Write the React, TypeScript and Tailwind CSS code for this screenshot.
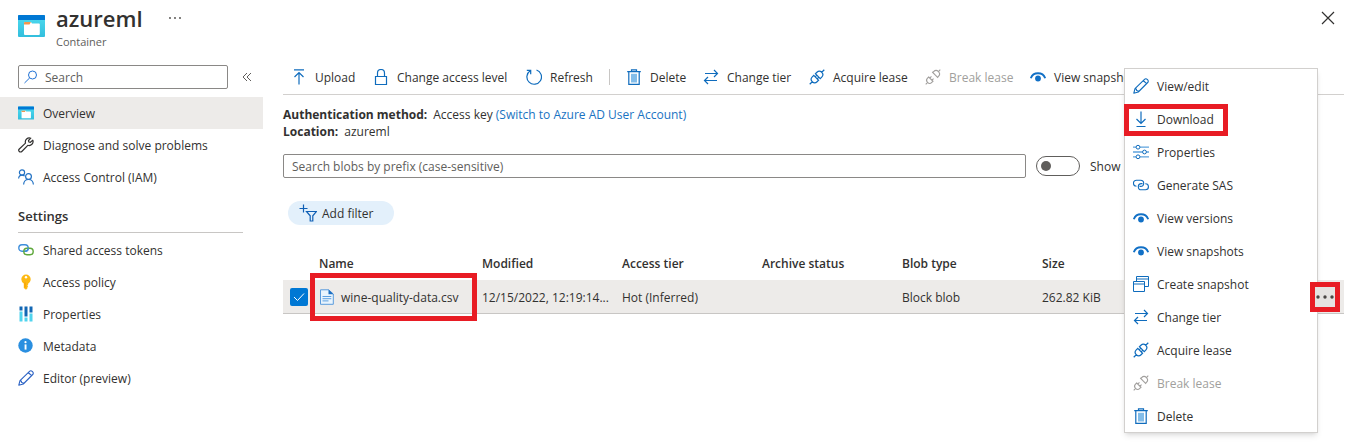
import React from "react";

type IconProps = { className?: string };

const blue = "text-[#0f6cbd]";

function Svg({ className = "", children }: { className?: string; children: React.ReactNode }) {
  return (
    <svg viewBox="0 0 16 16" fill="none" stroke="currentColor" strokeWidth="1" aria-hidden="true" className={`size-4 shrink-0 ${className}`}>
      {children}
    </svg>
  );
}

function ContainerIcon({ className = "size-4" }: IconProps) {
  return (
    <svg viewBox="0 0 27 24" aria-hidden="true" className={`shrink-0 ${className}`}>
      <defs>
        <linearGradient id="container-body" x1="0" y1="0" x2="0" y2="1">
          <stop offset="0" stopColor="#4fdcf0" />
          <stop offset="1" stopColor="#32bedd" />
        </linearGradient>
      </defs>
      <rect x="0" y="1" width="27" height="22" rx="1" fill="url(#container-body)" />
      <path d="M1 1h25a1 1 0 0 1 1 1v4H0V2a1 1 0 0 1 1-1z" fill="#0078d4" />
      <path d="M6 8.500q0-.5.5-.5H13l1 1.500h7q.8 0 .8.800V20q0 1-1 1H7q-1 0-1-1z" fill="#fff" />
      <path d="M6 8.500q0-.5.5-.5H13l-1.500 2.500H6z" fill="#f0974e" />
    </svg>
  );
}

const SearchIcon = () => (
  <Svg className="text-[#2272d4]">
    <circle cx="9.500" cy="6" r="4" />
    <path d="M6.600 9 1.500 14" />
  </Svg>
);
const WrenchIcon = () => (
  <Svg className="text-[#323130]">
    <path strokeWidth="1.200" strokeLinejoin="round" d="M12.800 1.200a4 4 0 0 0-5.300 4.900L1.300 12a1.700 1.700 0 0 0 2.500 2.500l6-6.200a4 4 0 0 0 5-5.200l-2.400 2.200-1.500-.3-.4-1.500z" />
  </Svg>
);
const PeopleIcon = () => (
  <Svg className="text-[#2272c4]">
    <circle cx="4" cy="3.500" r="2.600" strokeWidth="1.200" />
    <circle cx="10.500" cy="7.500" r="2.900" strokeWidth="1.200" />
    <path strokeWidth="1.200" d="M.6 9.500c.2-2 1.600-3.300 3.400-3.300 1 0 2 .4 2.600 1M5.600 15.500c.2-3 2.200-5 4.900-5s4.700 2 4.900 5" />
  </Svg>
);
const TokensIcon = () => (
  <Svg>
    <rect x=".8" y="2.800" width="9.400" height="6.400" rx="3.200" stroke="#3f8fdc" strokeWidth="1.400" />
    <rect x="5.800" y="6.300" width="9.400" height="6.400" rx="3.200" stroke="#5fa83c" strokeWidth="1.400" />
    <path d="M7 9.200c1.800 0 3.200-1.200 3.200-3.200" stroke="#3f8fdc" strokeWidth="1.400" />
  </Svg>
);
const KeyIcon = () => (
  <Svg>
    <path stroke="none" fill="#fdb913" d="M8 .6a4.700 4.700 0 0 1 4.700 4.700c0 1.800-1 3.300-2.500 4.100v1l-.9.9.9.9-.9 1 .4.700L8 15.700l-2.200-1.800V9.400a4.700 4.700 0 0 1-2.500-4.100A4.700 4.700 0 0 1 8 .6z" />
    <circle cx="8" cy="3.200" r="1.200" fill="#fff" stroke="none" />
    <path d="M7 8.500v5" stroke="#f59b00" />
  </Svg>
);
const BarsIcon = () => (
  <Svg>
    <g stroke="none">
      <path fill="#50d4ee" d="M1.500 5.500h3v10h-3zM6.500 11.500h3v4h-3zM11.500 7.500h3v8h-3z" />
      <path fill="#1267b4" d="M1.500.5h3v4h-3zM6.500.5h3v10h-3zM11.500.5h3v6h-3z" />
    </g>
  </Svg>
);
const InfoIcon = () => (
  <Svg>
    <circle cx="7.500" cy="7.500" r="7.200" fill="#2a8fe0" stroke="none" />
    <path d="M6.600 6.400h1.900v5.200H6.600z" fill="#fff" stroke="none" />
    <circle cx="7.500" cy="4.200" r="1.100" fill="#fff" stroke="none" />
  </Svg>
);
const PencilIcon = ({ className = blue }: IconProps) => (
  <Svg className={className}>
    <path strokeLinejoin="round" strokeWidth="1.100" d="m.8 15.200 1.200-4.600L11.500 1.300a1.900 1.900 0 0 1 2.700 0l.5.500a1.900 1.900 0 0 1 0 2.700L5.300 14zM10.300 2.500l3.200 3.200M2 10.600l1.300.4.300 1.500 1.400.2.300 1.300" />
  </Svg>
);
const UploadIcon = () => (
  <Svg className={blue}>
    <path strokeWidth="1.200" d="M3 .8h10M8 15.500V3.500M3.500 8 8 3.500 12.500 8" />
  </Svg>
);
const LockIcon = () => (
  <Svg className={blue}>
    <path strokeWidth="1.200" d="M2.500 7.500h11v8h-11zM4.500 7.500V4a3.500 3.500 0 0 1 7 0v3.500" />
  </Svg>
);
const RefreshIcon = () => (
  <Svg className={blue}>
    <path strokeWidth="1.200" d="M10.500 1a7.300 7.300 0 1 1-6.300.8M.8 1.300h3.900v4" />
  </Svg>
);
const TrashIcon = () => (
  <Svg className={blue}>
    <path fill="#83bde9" stroke="none" d="M5 4.800h6v8.700H5z" />
    <path strokeWidth="1.200" d="M1.200 2.600h13.600M5.500 2.600V.8h5v1.800M2.800 2.600v12.800h10.400V2.600" />
  </Svg>
);
const SwapIcon = () => (
  <Svg className={blue}>
    <path strokeWidth="1.200" d="M2 4.500h12.500M11 1l3.500 3.500L11 8M14 11.500H1.500M5 8l-3.500 3.500L5 15" />
  </Svg>
);
const PlugIcon = () => (
  <Svg className={blue}>
    <path
      transform="rotate(-45 8 8)"
      strokeWidth="1.200"
      d="M-2.300 8h3.600M14.700 8h3.600M6.800 4.600H4.700a3.400 3.400 0 0 0 0 6.800h2.100zM9.200 4.600h2.100a3.400 3.400 0 0 1 0 6.800H9.200zM6.800 6.600h2.400M6.800 9.400h2.400"
    />
  </Svg>
);
const BreakIcon = () => (
  <Svg className="text-[#a19f9d]">
    <path
      transform="rotate(-45 8 8)"
      strokeWidth="1.100"
      d="M-2.300 8h2.600M15.700 8h2.600M5 5H3.300a3 3 0 0 0 0 6H5zM11 4.600h1.300a3.400 3.400 0 0 1 0 6.800H11zM5 6.500h2.300M5 9.500h2.300M11 3.800v8.400"
    />
  </Svg>
);
const EyeIcon = () => (
  <Svg className="text-[#1170c6]">
    <circle cx="8" cy="9.500" r="2.900" fill="currentColor" stroke="none" />
    <path strokeWidth="1.900" d="M.8 9.300C1.900 6 4.700 4.200 8 4.200s6.100 1.800 7.200 5.100" />
  </Svg>
);
const DownloadIcon = () => (
  <Svg className={blue}>
    <path strokeWidth="1.200" d="M3.500 15.500h9M8 .5v12M3.500 8 8 12.500 12.500 8" />
  </Svg>
);
const SlidersIcon = () => (
  <Svg className={blue}>
    <path stroke="#5ea3dd" strokeWidth="1.300" d="M0 3.200h3M7 3.200h9M0 8h9.500M13.500 8H16M0 12.800h3M7 12.800h9" />
    <circle cx="5" cy="3.200" r="1.900" />
    <circle cx="11.500" cy="8" r="1.900" />
    <circle cx="5" cy="12.800" r="1.900" />
  </Svg>
);
const LinkIcon = () => (
  <Svg className={blue}>
    <path strokeWidth="1.100" d="M3.500 9.300A3 3 0 0 1 3.500 3.200H7.600a3.100 3.100 0 0 1 0 6.200H6.500M12.300 6.700a3 3 0 0 1 .2 6.100H8.400a3.100 3.100 0 0 1 0-6.200h1.100" />
  </Svg>
);
const WindowsIcon = () => (
  <Svg className={blue}>
    <path d="M.5 5.500h11v10H.5zM.5 8h11M3.500 5.500v-5h12v10h-4M3.500 3h12" />
  </Svg>
);
const FilterIcon = () => (
  <svg viewBox="0 0 18 18" fill="none" stroke="#0f5fb5" strokeWidth="1.200" aria-hidden="true" className="size-[18px] shrink-0">
    <path d="M4.500.5v8M.5 4.500h8M7.500 7.500h10l-3.700 4.300v5.200h-2.600v-5.200z" />
  </svg>
);
const FileIcon = () => (
  <Svg>
    <path d="M1.500.8h8.200L14.300 5v10.300H1.500z" fill="#e9f4fd" stroke="#5b9bdc" />
    <path d="M9.500.5v4.800h5z" fill="#1c6fc2" stroke="none" />
    <path d="M3.500 7.500h8.800M3.500 9.700h8.800M3.500 11.900h6" stroke="#5ea0e0" />
  </Svg>
);

const primaryNav = [
  { label: "Overview", icon: <ContainerIcon />, active: true },
  { label: "Diagnose and solve problems", icon: <WrenchIcon /> },
  { label: "Access Control (IAM)", icon: <PeopleIcon /> },
];

const settingsNav = [
  { label: "Shared access tokens", icon: <TokensIcon /> },
  { label: "Access policy", icon: <KeyIcon /> },
  { label: "Properties", icon: <BarsIcon /> },
  { label: "Metadata", icon: <InfoIcon /> },
  { label: "Editor (preview)", icon: <PencilIcon className="text-[#2b62c4]" /> },
];

const toolbar = [
  { label: "Upload", icon: <UploadIcon />, width: "w-[82px]" },
  { label: "Change access level", icon: <LockIcon />, width: "w-[153px]" },
  { label: "Refresh", icon: <RefreshIcon />, width: "w-[83px]", divider: true },
  { label: "Delete", icon: <TrashIcon />, width: "w-[77px]" },
  { label: "Change tier", icon: <SwapIcon />, width: "w-[106px]" },
  { label: "Acquire lease", icon: <PlugIcon />, width: "w-[116px]" },
  { label: "Break lease", icon: <BreakIcon />, width: "w-[105px]", disabled: true },
  { label: "View snapshots", icon: <EyeIcon />, width: "w-[120px]" },
];

const menu = [
  { label: "View/edit", icon: <PencilIcon /> },
  { label: "Download", icon: <DownloadIcon />, marked: true },
  { label: "Properties", icon: <SlidersIcon /> },
  { label: "Generate SAS", icon: <LinkIcon /> },
  { label: "View versions", icon: <EyeIcon /> },
  { label: "View snapshots", icon: <EyeIcon /> },
  { label: "Create snapshot", icon: <WindowsIcon /> },
  { label: "Change tier", icon: <SwapIcon /> },
  { label: "Acquire lease", icon: <PlugIcon /> },
  { label: "Break lease", icon: <BreakIcon />, disabled: true },
  { label: "Delete", icon: <TrashIcon /> },
];

function NavList({ items }: { items: { label: string; icon: React.ReactNode; active?: boolean }[] }) {
  return (
    <ul>
      {items.map((item) => (
        <li key={item.label}>
          <a
            href="#"
            aria-current={item.active ? "page" : undefined}
            className={`flex h-8 items-center gap-[9px] pl-[18px] ${item.active ? "bg-[#edebe9]" : ""}`}
          >
            {item.icon}
            {item.label}
          </a>
        </li>
      ))}
    </ul>
  );
}

export default function App() {
  return (
    <div className="relative overflow-hidden bg-white pb-[54px] font-['Open_Sans','Noto_Sans',sans-serif] text-[12px] leading-[17px] text-[#323130]">
      <header className="flex h-[65px] items-start pr-[25px] pl-[18px]">
        <ContainerIcon className="mt-3.5 h-6 w-[27px]" />
        <div className="ml-[11px]">
          <h1 className="mt-[3px] h-[30px] text-[22px] leading-[30px] font-semibold">azureml</h1>
          <p className="text-[11px] leading-[18px] text-[#605e5c]">Container</p>
        </div>
        <button aria-label="More options" className="mt-[15px] ml-6 flex h-1.5 w-4 items-center justify-center">
          <svg viewBox="0 0 14 4" className="h-1 w-3.5" fill="#484644" aria-hidden="true">
            <circle cx="2" cy="2" r="0.9" />
            <circle cx="7" cy="2" r="0.9" />
            <circle cx="12" cy="2" r="0.9" />
          </svg>
        </button>
        <button aria-label="Close" className="mt-[11px] ml-auto">
          <svg viewBox="0 0 14 14" className="size-3.5" fill="none" stroke="#323130" strokeWidth="1.200" aria-hidden="true">
            <path d="m1 1 12 12M13 1 1 13" />
          </svg>
        </button>
      </header>

      <div className="flex">
        <aside className="w-[263px] shrink-0">
          <div className="mb-2 flex items-center gap-3.5 pl-[18px]">
            <label className="flex h-6 w-[210px] items-center gap-1.5 rounded-xs border border-[#8a8886] pl-1">
              <SearchIcon />
              <input aria-label="Search" placeholder="Search" className="w-full min-w-0 outline-none placeholder:text-[#605e5c]" />
            </label>
            <button aria-label="Collapse menu">
              <svg viewBox="0 0 10 10" className="size-2.5" fill="none" stroke="#605e5c" aria-hidden="true">
                <path d="M5 1 1 5l4 4M9 1 5 5l4 4" />
              </svg>
            </button>
          </div>
          <nav aria-label="Container">
            <NavList items={primaryNav} />
            <h2 className="mt-[15px] mr-5 mb-px ml-[18px] border-b border-[#c8c6c4] pb-[7px] text-[13px] font-semibold">Settings</h2>
            <NavList items={settingsNav} />
          </nav>
        </aside>

        <main className="min-w-0 flex-1 pr-4 pl-5">
          <div role="toolbar" aria-label="Blob actions" className="flex h-[30px] items-start overflow-hidden border-b border-[#d2d0ce] pl-2">
            {toolbar.map((item) => (
              <React.Fragment key={item.label}>
                <button
                  disabled={item.disabled}
                  className={`flex h-6 shrink-0 items-center gap-2 whitespace-nowrap ${item.width} ${item.disabled ? "text-[#a19f9d]" : ""}`}
                >
                  {item.icon}
                  {item.label}
                </button>
                {item.divider && <span className="mt-1 mr-4 h-4 w-px shrink-0 bg-[#c8c6c4]" />}
              </React.Fragment>
            ))}
          </div>

          <dl className="mt-[11px]">
            <div className="flex gap-1.5">
              <dt className="font-bold">Authentication method:</dt>
              <dd>
                Access key{" "}
                <a href="#" className="text-[#1a73c2]">
                  (Switch to Azure AD User Account)
                </a>
              </dd>
            </div>
            <div className="flex gap-1.5">
              <dt className="font-bold">Location:</dt>
              <dd>azureml</dd>
            </div>
          </dl>

          <div className="mt-3.5 flex items-center">
            <input
              aria-label="Search blobs by prefix"
              placeholder="Search blobs by prefix (case-sensitive)"
              className="h-6 w-[743px] rounded-xs border border-[#8a8886] px-2 outline-none placeholder:text-[#605e5c]"
            />
            <label className="ml-2.5 flex items-center gap-2.5 whitespace-nowrap">
              <input
                type="checkbox"
                role="switch"
                className="flex h-5 w-11 appearance-none items-center rounded-full border border-[#605e5c] px-1 before:size-2.5 before:rounded-full before:bg-[#605e5c]"
              />
              Show
            </label>
          </div>

          <button className="mt-[23px] ml-[5px] flex h-6 w-[106px] items-center gap-[5px] rounded-full bg-[#e3f0fb] pl-[11px]">
            <FilterIcon />
            Add filter
          </button>

          <table className="mt-[22px] w-full table-fixed text-left">
            <colgroup>
              <col className="w-9" />
              <col className="w-[163px]" />
              <col className="w-[140px]" />
              <col className="w-[140px]" />
              <col className="w-[140px]" />
              <col className="w-[140px]" />
              <col className="w-[140px]" />
              <col />
            </colgroup>
            <thead>
              <tr className="h-[33px] *:font-semibold">
                <td />
                <th>Name</th>
                <th>Modified</th>
                <th>Access tier</th>
                <th>Archive status</th>
                <th>Blob type</th>
                <th>Size</th>
                <td />
              </tr>
            </thead>
            <tbody>
              <tr className="h-[33px] border-b border-[#c8c6c4] bg-[#edebe9] *:pt-0.5">
                <td className="pl-[7px]">
                  <span className="grid size-[18px] place-items-center">
                    <input
                      type="checkbox"
                      defaultChecked
                      aria-label="Select wine-quality-data.csv"
                      className="col-start-1 row-start-1 size-[18px] appearance-none rounded-xs bg-[#0078d4]"
                    />
                    <svg viewBox="0 0 12 10" className="pointer-events-none col-start-1 row-start-1 h-2.5 w-3" fill="none" stroke="#fff" aria-hidden="true">
                      <path d="m1 5 3.500 3.500L11 1.500" />
                    </svg>
                  </span>
                </td>
                <td className="relative">
                  <a href="#" className="flex items-center gap-1.5 whitespace-nowrap">
                    <FileIcon />
                    wine-quality-data.csv
                  </a>
                  <span className="pointer-events-none absolute -top-[7px] -left-[9px] h-12 w-[167px] border-5 border-[#e81c24]" />
                </td>
                <td className="whitespace-nowrap">12/15/2022, 12:19:14...</td>
                <td>Hot (Inferred)</td>
                <td />
                <td>Block blob</td>
                <td>262.82 KiB</td>
                <td>
                  <button
                    aria-label="More actions"
                    className="relative z-10 mr-1 ml-auto flex size-[30px] items-center justify-center border-5 border-[#e81c24] bg-[#e5e3e1]"
                  >
                    <svg viewBox="0 0 18 4" className="h-1 w-[18px] shrink-0" fill="#484644" aria-hidden="true">
                      <circle cx="2" cy="2" r="1.700" />
                      <circle cx="9" cy="2" r="1.700" />
                      <circle cx="16" cy="2" r="1.700" />
                    </svg>
                  </button>
                </td>
              </tr>
            </tbody>
          </table>
        </main>
      </div>

      <div role="menu" className="absolute top-[68px] right-[42px] w-[194px] border border-[#d2d0ce] bg-white shadow-md">
        {menu.map((item) => (
          <button
            key={item.label}
            role="menuitem"
            disabled={item.disabled}
            className={`relative flex h-[33px] w-full items-center gap-2 pt-px pl-2 ${item.disabled ? "text-[#a19f9d]" : ""}`}
          >
            {item.icon}
            {item.label}
            {item.marked && <span className="pointer-events-none absolute top-0.5 -left-px h-8 w-[104px] border-5 border-[#e81c24]" />}
          </button>
        ))}
      </div>
    </div>
  );
}
